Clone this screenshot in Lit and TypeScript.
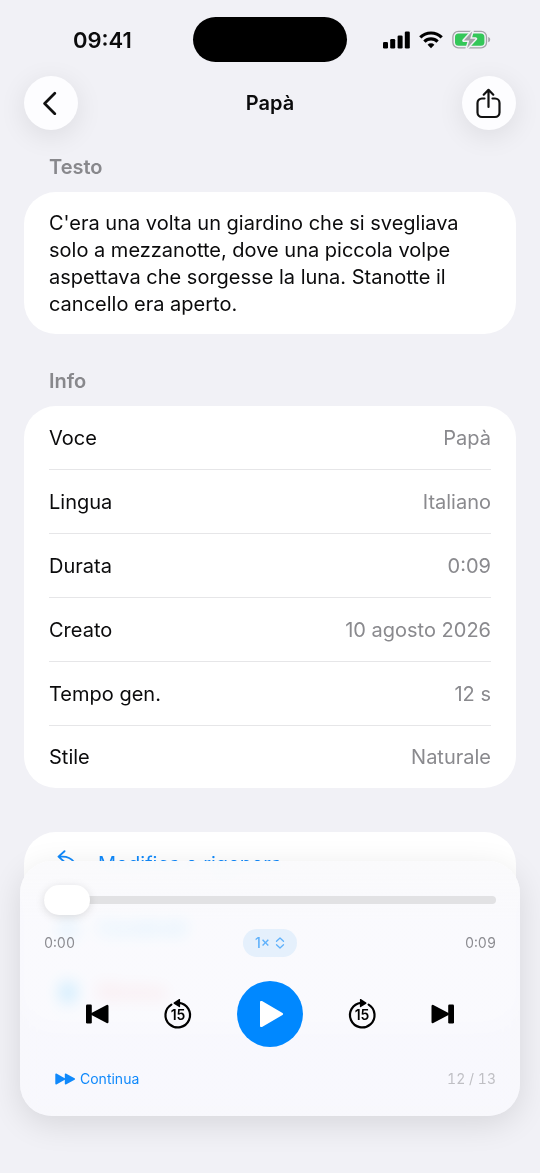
import { LitElement, html, css, svg } from "lit";
import { customElement, state } from "lit/decorators.js";

interface InfoRow {
  label: string;
  value: string;
}

const INFO: InfoRow[] = [
  { label: "Voce", value: "Papà" },
  { label: "Lingua", value: "Italiano" },
  { label: "Durata", value: "0:09" },
  { label: "Creato", value: "10 agosto 2026" },
  { label: "Tempo gen.", value: "12 s" },
  { label: "Stile", value: "Naturale" },
];

const skipShape = svg`
  <rect x="1" y="0.500" width="5.800" height="19" rx="1.200"/>
  <path d="M23.500 2v16a1.200 1.200 0 0 1-1.800 1.100L6.500 10.900a1.100 1.100 0 0 1 0-1.900L21.700 0.900a1.200 1.200 0 0 1 1.800 1.100z"/>`;

@customElement("status-bar")
export class StatusBar extends LitElement {
  static styles = css`
    :host {
      display: grid;
      grid-template-columns: 1fr 154px 1fr;
      align-items: center;
      padding-top: 17px;
    }
    .time {
      padding-left: 73px;
      font-size: 22px;
      line-height: 28px;
      font-weight: 600;
    }
    .island {
      height: 45px;
      border-radius: 23px;
      background: #000;
    }
    .icons {
      display: flex;
      align-items: center;
      justify-content: flex-end;
      gap: 9px;
      padding-right: 49px;
    }
    svg {
      display: block;
    }
    .bolt {
      paint-order: stroke;
    }
  `;

  render() {
    return html`
      <div class="time">09:41</div>
      <div class="island"></div>
      <div class="icons">
        <svg width="28" height="18" viewBox="0 0 28 18" aria-hidden="true">
          <rect x="1" y="11" width="5" height="6.500" rx="1.300" />
          <rect x="8.200" y="8" width="5" height="9.500" rx="1.300" />
          <rect x="15.600" y="4.500" width="5" height="13" rx="1.300" />
          <rect x="22.800" y="0.500" width="5" height="17" rx="1.300" />
        </svg>
        <svg width="24" height="18" viewBox="0 0 24 18" aria-hidden="true">
          <g fill="none" stroke="#000" stroke-width="3.200">
            <path d="M1.300 6.400a15.200 15.200 0 0 1 21.400 0" />
            <path d="M5.400 10.700a9.300 9.300 0 0 1 13.200 0" />
          </g>
          <path d="M12 17.200l-3.400-3.500a4.800 4.800 0 0 1 6.800 0z" />
        </svg>
        <svg width="39" height="20" viewBox="0 0 39 20" aria-hidden="true">
          <rect x="0.900" y="1.400" width="33.600" height="16.400" rx="5.400" fill="none" stroke="#a3a3a8" stroke-width="1.300" />
          <path d="M36.200 6.900c1.400.400 2 1.500 2 2.700s-.600 2.300-2 2.700z" fill="#a3a3a8" />
          <rect x="3" y="3.500" width="29.400" height="12.200" rx="3.500" fill="#34c759" />
          <path class="bolt" d="M20.300 1.200L11.800 10.600h5.500l-2.300 7.600 8.700-9.400h-5.500z" fill="#a3a3a8" stroke="#f1f1f5" stroke-width="3" stroke-linejoin="round" />
        </svg>
      </div>
    `;
  }
}

@customElement("audio-player")
export class AudioPlayer extends LitElement {
  @state() private position = 0;

  static styles = css`
    :host {
      display: flex;
      flex-direction: column;
      box-sizing: border-box;
      padding: 24px 24px 27px;
      border-radius: 32px;
      background: linear-gradient(rgba(250, 250, 252, 0.98) 12px, rgba(249, 249, 253, 0.85) 60px);
      backdrop-filter: blur(8px) saturate(1.8);
      box-shadow: 0 8px 32px rgba(0, 0, 0, 0.11);
    }
    button,
    select {
      margin: 0;
      padding: 0;
      border: 0;
      background: none;
      color: inherit;
      font: inherit;
      appearance: none;
      cursor: pointer;
    }
    svg {
      display: block;
    }
    .seek {
      appearance: none;
      display: block;
      width: 100%;
      height: 30px;
      margin: 0;
      background: none;
    }
    .seek::-webkit-slider-runnable-track {
      height: 8px;
      border-radius: 4px;
      background: #e2e2e4;
    }
    .seek::-webkit-slider-thumb {
      appearance: none;
      width: 46px;
      height: 30px;
      margin-top: -11px;
      border-radius: 15px;
      background: #fff;
      box-shadow: 0 2px 10px rgba(0, 0, 0, 0.13);
    }
    .times {
      display: grid;
      grid-template-columns: 1fr auto 1fr;
      align-items: center;
      margin-top: 14px;
      color: #8c8c91;
      font-size: 14px;
      line-height: 20px;
      font-variant-numeric: tabular-nums;
    }
    .total {
      text-align: right;
    }
    .speed {
      display: flex;
      align-items: center;
      justify-content: center;
      gap: 4px;
      box-sizing: border-box;
      height: 28px;
      padding: 0 12px;
      border-radius: 14px;
      background: #e5f0fc;
      color: #5eb0fb;
      font-weight: 500;
      font-variant-numeric: normal;
    }
    .controls {
      display: flex;
      align-items: center;
      justify-content: center;
      gap: 37px;
      margin-top: 24px;
    }
    .control {
      display: grid;
      place-items: center;
      width: 44px;
      height: 44px;
    }
    .play {
      display: grid;
      place-items: center;
      width: 66px;
      height: 66px;
      border-radius: 50%;
      background: #0088ff;
    }
    .count {
      font-size: 14px;
      font-weight: 600;
    }
    .footer {
      display: flex;
      align-items: center;
      justify-content: space-between;
      margin-top: 22px;
      padding-left: 11px;
      font-size: 14px;
      line-height: 20px;
      color: #bfbfc4;
    }
    .queue {
      font-variant-numeric: tabular-nums;
    }
    .continue {
      display: flex;
      align-items: center;
      gap: 5px;
      color: #1089fb;
    }
  `;

  private seek(e: Event) {
    this.position = Number((e.target as HTMLInputElement).value);
  }

  private jumpIcon(forward: boolean) {
    return html`
      <svg width="30" height="32" viewBox="0 0 30 32" aria-hidden="true">
        <g transform=${forward ? "" : "translate(30 0) scale(-1 1)"}>
          <path d="M21.600 6.600A12.300 12.300 0 1 1 14 4.900" fill="none" stroke="#000" stroke-width="2.200" stroke-linecap="round" />
          <path d="M12.900 1.500v7.200a.600.600 0 0 0 1 .400l5.300-3.400a.700.700 0 0 0 0-1.100L13.900 1.100a.600.600 0 0 0-1 .400z" />
        </g>
        <text class="count" x="15" y="22" text-anchor="middle">15</text>
      </svg>
    `;
  }

  render() {
    return html`
      <input class="seek" type="range" min="0" max="9" .value=${String(this.position)} @input=${this.seek} aria-label="Posizione" />
      <div class="times">
        <span>0:0${this.position}</span>
        <label class="speed">
          <select aria-label="Velocità">
            <option>1×</option>
          </select>
          <svg width="10" height="12" viewBox="0 0 10 12" fill="none" stroke="currentColor" stroke-width="1.300" stroke-linecap="round" stroke-linejoin="round" aria-hidden="true">
            <path d="M1.500 4.200L5 1l3.500 3.200M1.500 7.800L5 11l3.500-3.200" />
          </svg>
        </label>
        <span class="total">0:09</span>
      </div>
      <div class="controls">
        <button class="control" aria-label="Precedente">
          <svg width="24" height="20" viewBox="0 0 24 20" aria-hidden="true">${skipShape}</svg>
        </button>
        <button class="control" aria-label="Indietro di 15 secondi">${this.jumpIcon(false)}</button>
        <button class="play" aria-label="Riproduci">
          <svg width="28" height="30" viewBox="0 0 28 30" fill="#fff" aria-hidden="true">
            <path d="M4 3.300v23.400a1.300 1.300 0 0 0 2 1.200l20.500-11.900a1.200 1.200 0 0 0 0-2.100L6 2.100A1.300 1.300 0 0 0 4 3.300z" />
          </svg>
        </button>
        <button class="control" aria-label="Avanti di 15 secondi">${this.jumpIcon(true)}</button>
        <button class="control" aria-label="Successivo">
          <svg width="24" height="20" viewBox="0 0 24 20" aria-hidden="true">
            <g transform="translate(24 0) scale(-1 1)">${skipShape}</g>
          </svg>
        </button>
      </div>
      <div class="footer">
        <button class="continue">
          <svg width="20" height="12" viewBox="0 0 20 12" fill="currentColor" aria-hidden="true">
            <path d="M.300 1.200v9.600c0 .600.600.900 1.100.600l8.400-4.600v4c0 .600.600.900 1.100.600l8.700-4.700a.800.800 0 0 0 0-1.400L10.900.600c-.500-.300-1.100 0-1.100.600v4L1.400.600C.900.300.300.600.300 1.200z" />
          </svg>
          Continua
        </button>
        <span class="queue">12 / 13</span>
      </div>
    `;
  }
}

@customElement("app-root")
export class AppRoot extends LitElement {
  static styles = css`
    :host {
      display: block;
      box-sizing: border-box;
      min-height: 100vh;
      padding-bottom: 148px;
      background: #f1f1f6;
      color: #0b0b0c;
      font-family: Inter, "Liberation Sans", sans-serif;
      font-size: 20px;
      line-height: 27px;
    }
    svg {
      display: block;
    }
    button {
      margin: 0;
      padding: 0;
      border: 0;
      background: none;
      color: inherit;
      font: inherit;
      cursor: pointer;
    }
    .header {
      display: flex;
      align-items: center;
      justify-content: space-between;
      padding: 14px 24px 0;
    }
    .round {
      display: grid;
      place-items: center;
      width: 54px;
      height: 54px;
      border-radius: 50%;
      background: #fdfdff;
      box-shadow: 0 6px 28px rgba(0, 0, 0, 0.09);
    }
    h1,
    h2,
    p,
    dl,
    dd {
      margin: 0;
    }
    h1,
    h2 {
      font-size: 20px;
      line-height: 26px;
      font-weight: 600;
    }
    h2 {
      padding: 0 25px 12px;
      color: #88888c;
    }
    main {
      display: flex;
      flex-direction: column;
      gap: 34px;
      padding: 24px 24px 0;
    }
    .card {
      border-radius: 32px;
      background: #fff;
      padding: 0 25px;
    }
    .story {
      padding: 18px 25px 16px;
    }
    .row {
      display: flex;
      align-items: center;
      justify-content: space-between;
      box-sizing: border-box;
      height: 64px;
      padding-top: 1px;
      border-bottom: 1px solid #e6e6e8;
    }
    .row:last-child {
      height: 62px;
      border-bottom: 0;
    }
    .value {
      color: #8a8a8e;
    }
    .actions {
      margin-top: 10px;
    }
    .action {
      display: flex;
      align-items: center;
      gap: 19px;
      width: 100%;
      height: 64px;
      padding-left: 8px;
      color: #1089fb;
    }
    .danger {
      color: #ff383c;
    }
    .danger svg {
      color: #1089fb;
    }
    .player {
      position: fixed;
      left: 20px;
      right: 20px;
      bottom: 57px;
    }
  `;

  render() {
    return html`
      <status-bar></status-bar>
      <header class="header">
        <button class="round" aria-label="Indietro">
          <svg width="18" height="24" viewBox="0 0 18 24" fill="none" stroke="#111" stroke-width="2.700" stroke-linecap="round" stroke-linejoin="round" aria-hidden="true">
            <path d="M12.800 2.200L2.600 12.500l10.200 10.200" />
          </svg>
        </button>
        <h1>Papà</h1>
        <button class="round" aria-label="Condividi">
          <svg width="26" height="32" viewBox="0 0 26 32" fill="none" stroke="#111" stroke-width="2.200" stroke-linecap="round" stroke-linejoin="round" aria-hidden="true">
            <path d="M8.500 11.500H6A4.500 4.500 0 0 0 1.500 16v9.500A4.500 4.500 0 0 0 6 30h13A4.500 4.500 0 0 0 23.500 25.500V16A4.500 4.500 0 0 0 19 11.500H16.500" />
            <path d="M12.500 20V3M7.700 7.700L12.500 2.800l4.800 4.900" />
          </svg>
        </button>
      </header>
      <main>
        <section>
          <h2>Testo</h2>
          <p class="card story">
            C'era una volta un giardino che si svegliava solo a mezzanotte, dove una piccola volpe aspettava che sorgesse la luna. Stanotte il cancello era aperto.
          </p>
        </section>
        <section>
          <h2>Info</h2>
          <dl class="card">
            ${INFO.map(
              (r) => html`<div class="row"><dt>${r.label}</dt><dd class="value">${r.value}</dd></div>`
            )}
          </dl>
        </section>
        <section class="card actions">
          <button class="action">
            <svg width="22" height="28" viewBox="0 0 22 28" fill="none" stroke="currentColor" stroke-width="1.900" stroke-linecap="round" stroke-linejoin="round" aria-hidden="true">
              <path d="M7.500 1.200L1.500 6.600l6 5.400M1.800 6.600h3.700c5 0 8.500 1.500 11.500 5.400c1 1.400 1.500 3 1.700 5" />
            </svg>
            Modifica e rigenera
          </button>
          <button class="action">
            <svg width="22" height="22" viewBox="0 0 22 22" fill="none" stroke="currentColor" stroke-width="2" aria-hidden="true">
              <path d="M7 8H4v12h14V8h-3M11 14V2M7 6l4-4 4 4" />
            </svg>
            Condividi
          </button>
          <button class="action danger">
            <svg width="22" height="22" viewBox="0 0 22 22" fill="currentColor" stroke="currentColor" stroke-width="2" aria-hidden="true">
              <path d="M2 5h18M8 5V2h6v3M4 5l1 15h12l1-15M9 9v7M13 9v7" />
            </svg>
            Elimina
          </button>
        </section>
      </main>
      <audio-player class="player"></audio-player>
    `;
  }
}
